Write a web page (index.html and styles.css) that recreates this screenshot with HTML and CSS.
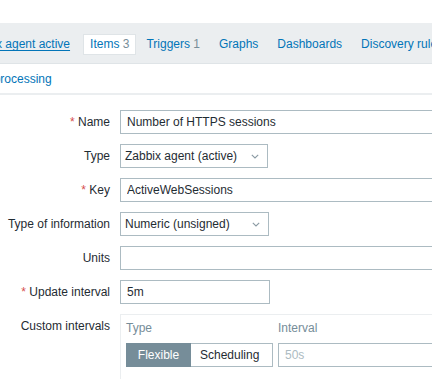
FILE: index.html
```html
<!DOCTYPE html>
<html>
<head>
<meta charset="utf-8">
<link rel="stylesheet" href="styles.css">
</head>
<body>
<div class="page">
  <div class="topspace"></div>
  <nav class="tabbar">
    <a class="crumb">x agent active</a>
    <span class="tab active">Items <span class="count">3</span></span>
    <a class="tab">Triggers <span class="count">1</span></a>
    <a class="tab">Graphs</a>
    <a class="tab">Dashboards</a>
    <a class="tab">Discovery rules</a>
  </nav>
  <div class="subtabs">
    <a class="subtab">Preprocessing</a>
  </div>
  <form class="form">
    <label class="lbl"><span class="req">*</span> Name</label>
    <div class="field"><input class="inp wide" type="text" value="Number of HTTPS sessions"></div>

    <label class="lbl">Type</label>
    <div class="field"><div class="select s148"><span>Zabbix agent (active)</span><svg class="chev" width="8" height="5" viewBox="0 0 8 5"><path d="M0.8 0.8 L4 4 L7.2 0.8" fill="none" stroke="#8a9aa3" stroke-width="1.1"/></svg></div></div>

    <label class="lbl"><span class="req">*</span> Key</label>
    <div class="field"><input class="inp wide" type="text" value="ActiveWebSessions"></div>

    <label class="lbl">Type of information</label>
    <div class="field"><div class="select s149"><span>Numeric (unsigned)</span><svg class="chev" width="8" height="5" viewBox="0 0 8 5"><path d="M0.8 0.8 L4 4 L7.2 0.8" fill="none" stroke="#8a9aa3" stroke-width="1.1"/></svg></div></div>

    <label class="lbl">Units</label>
    <div class="field"><input class="inp wide" type="text" value=""></div>

    <label class="lbl"><span class="req">*</span> Update interval</label>
    <div class="field"><input class="inp i150" type="text" value="5m"></div>

    <label class="lbl top">Custom intervals</label>
    <div class="field">
      <div class="custom">
        <div class="chead">
          <span class="ctype">Type</span>
          <span class="cint">Interval</span>
        </div>
        <div class="crow">
          <div class="seg">
            <span class="segbtn on">Flexible</span>
            <span class="segbtn">Scheduling</span>
          </div>
          <input class="inp cinp" type="text" placeholder="50s">
        </div>
      </div>
    </div>
  </form>
</div>
</body>
</html>
```

FILE: styles.css
```css
* { box-sizing: border-box; }
html, body { margin: 0; padding: 0; background: #fff; }
body {
  font-family: "Liberation Sans", Arial, sans-serif;
  font-size: 12px;
  color: #1f2c33;
  width: 432px;
  height: 379px;
  overflow: hidden;
}
.page { width: 432px; overflow: hidden; }
.topspace { height: 23px; }
.tabbar {
  height: 41px;
  background: #ebeef0;
  border-bottom: 1px solid #dfe4e7;
  display: flex;
  align-items: center;
  white-space: nowrap;
  padding-top: 2px;
}
.crumb {
  color: #0275b8;
  text-decoration: underline;
  text-underline-offset: 2px;
  margin-left: -4px;
  margin-right: 13px;
}
.tab {
  color: #0275b8;
  padding: 4px 6px;
  margin-right: 5px;
  line-height: 11px;
  border: 1px solid transparent;
}
.tab.active {
  background: #fff;
  border-color: #dfe4e7;
  color: #0275b8;
  margin-right: 3px;
}
.count { color: #768d99; }
.subtabs {
  height: 31px;
  border-bottom: 2px solid #ebeef0;
  display: flex;
  align-items: center;
  white-space: nowrap;
}
.subtab { color: #0275b8; margin-left: -25px; font-size: 12px; padding-top: 1px; }
.form {
  display: grid;
  grid-template-columns: 110px 600px;
  column-gap: 10px;
  row-gap: 10px;
  padding-top: 15px;
}
.lbl {
  text-align: right;
  line-height: 24px;
  height: 24px;
  white-space: nowrap;
}
.req { color: #d64e4e; }
.field { display: flex; }
.inp {
  height: 24px;
  border: 1px solid #acbbc2;
  font-family: "Liberation Sans", Arial, sans-serif;
  font-size: 12px;
  color: #1f2c33;
  padding: 0 6px;
  background: #fff;
  outline: none;
}
.inp::placeholder { color: #acbbc2; }
.wide { width: 453px; }
.i150 { width: 150px; }
.select {
  height: 24px;
  border: 1px solid #acbbc2;
  display: flex;
  align-items: center;
  justify-content: space-between;
  padding: 0 8px 0 4px;
}
.s148 { width: 148px; }
.s149 { width: 149px; }
.chev { display: block; margin-top: 1px; }
.custom {
  width: 400px;
  height: 80px;
  border: 1px solid #ebeef0;
  padding: 5px 5px;
}
.chead { display: flex; height: 16px; align-items: center; color: #768d99; }
.ctype { width: 152px; }
.crow { display: flex; margin-top: 7px; align-items: center; }
.seg { display: flex; }
.segbtn {
  height: 24px;
  line-height: 22px;
  border: 1px solid #acbbc2;
  padding: 0 9px;
  background: #fff;
  color: #1f2c33;
}
.segbtn.on {
  background: #768d99;
  border-color: #768d99;
  color: #fff;
  width: 65px;
  text-align: center;
}
.segbtn + .segbtn { border-left: none; width: 82px; }
.cinp { margin-left: 5px; width: 160px; }
```
